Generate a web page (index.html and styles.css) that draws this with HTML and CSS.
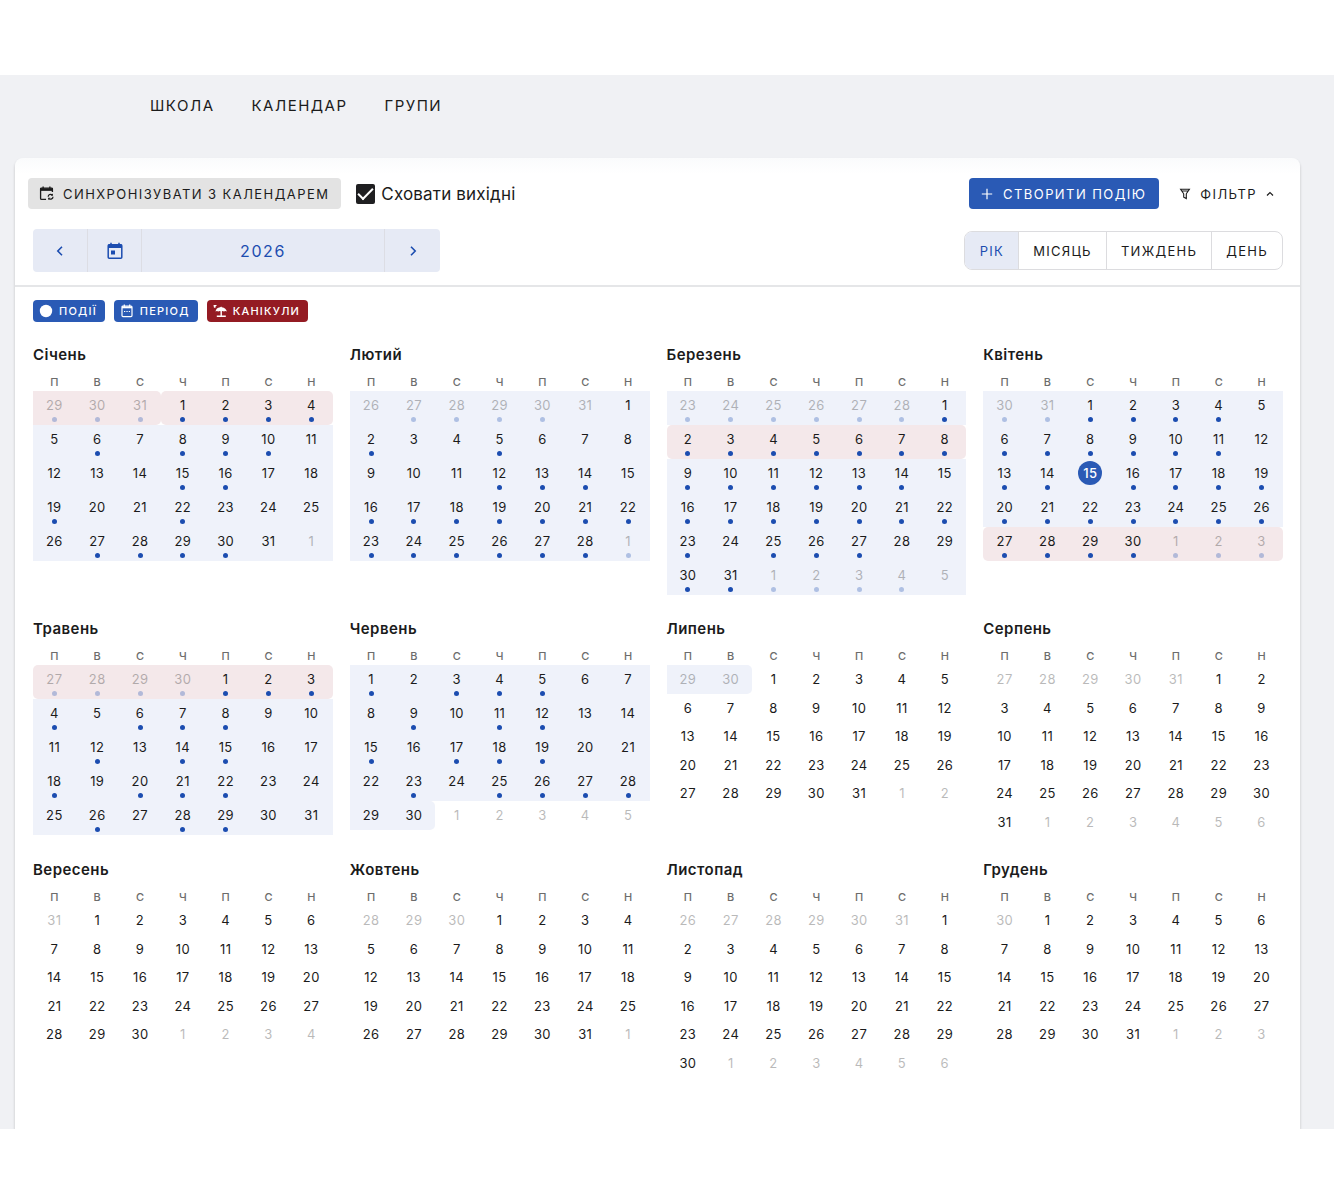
FILE: index.html
```html
<!DOCTYPE html>
<html lang="uk">
<head>
<meta charset="utf-8">
<meta name="viewport" content="width=device-width, initial-scale=1">
<title>Календар</title>
<link rel="stylesheet" href="styles.css">
</head>
<body>
<div class="app">
  <nav class="site-nav">
    <a href="#school">ШКОЛА</a>
    <a href="#calendar">КАЛЕНДАР</a>
    <a href="#groups">ГРУПИ</a>
  </nav>
  <main class="card">
    <header class="toolbar">
      <div class="actions">
        <button class="btn btn-grey" type="button">
          <svg width="15" height="15" viewBox="0 0 16 16" fill="none" stroke="currentColor" stroke-width="1.4"><path d="M14.3 6.500V3.200Q14.300 2.200 13.300 2.200H2.700Q1.700 2.200 1.700 3.200V13.300Q1.700 14.300 2.700 14.300H7.500"/><path d="M1.500 2.500H14.500V5.200H1.500Z" fill="currentColor" stroke="none"/><path d="M4.400 .5V3M11.600 .5V3"/><path d="M9.800 11.400A2.600 2.600 0 0 1 14 9.400M14.900 11.400A2.600 2.600 0 0 1 10.700 13.500" stroke-width="1.300"/><path d="M14.900 8V10.500H12.400ZM9.700 14.900V12.400H12.200Z" fill="currentColor" stroke="none"/></svg>
          <span>СИНХРОНІЗУВАТИ З КАЛЕНДАРЕМ</span>
        </button>
        <label class="check"><input type="checkbox" checked><span>Сховати вихідні</span></label>
        <button class="btn btn-primary" type="button">
          <svg width="12" height="12" viewBox="0 0 12 12" fill="none" stroke="currentColor" stroke-width="1.200"><path d="M6 .8V11.200M.8 6H11.200"/></svg>
          <span>СТВОРИТИ ПОДІЮ</span>
        </button>
        <button class="btn btn-plain" type="button">
          <svg width="12" height="12" viewBox="0 0 12 12" fill="none" stroke="currentColor" stroke-width="1.100"><path d="M1.600 1.200H10.400L7.300 5.800V10.600L4.700 9.200V5.800ZM2.600 3H9.400"/></svg>
          <span>ФІЛЬТР</span>
          <svg width="8" height="8" viewBox="0 0 8 8" fill="none" stroke="currentColor" stroke-width="1.200"><path d="M1 5.500 4 2.500 7 5.500"/></svg>
        </button>
      </div>
      <div class="period">
        <div class="stepper">
          <button type="button" aria-label="Попередній рік"><svg width="10" height="12" viewBox="0 0 10 12" fill="none" stroke="currentColor" stroke-width="1.600"><path d="M7 1.800 2.800 6 7 10.200"/></svg></button>
          <button type="button" aria-label="Сьогодні"><svg width="16" height="18" viewBox="0 0 16 18" fill="none" stroke="currentColor" stroke-width="1.500"><rect x="1.200" y="2.700" width="13.600" height="13.600" rx="1"/><path d="M1 2.500H15V6H1Z" fill="currentColor" stroke="none"/><path d="M4 .8V3M12 .8V3"/><path d="M4 8.500H8V12.500H4Z" fill="currentColor" stroke="none"/></svg></button>
          <button class="stepper-year" type="button">2026</button>
          <button type="button" aria-label="Наступний рік"><svg width="10" height="12" viewBox="0 0 10 12" fill="none" stroke="currentColor" stroke-width="1.600"><path d="M3 1.800 7.200 6 3 10.200"/></svg></button>
        </div>
        <div class="views">
          <button class="active" type="button">РІК</button>
          <button type="button">МІСЯЦЬ</button>
          <button type="button">ТИЖДЕНЬ</button>
          <button type="button">ДЕНЬ</button>
        </div>
      </div>
    </header>
    <div class="legend">
      <button class="chip" type="button"><svg width="14" height="14" viewBox="0 0 14 14"><circle cx="7" cy="7" r="6.200" fill="currentColor"/></svg><span>ПОДІЇ</span></button>
      <button class="chip" type="button"><svg width="14" height="14" viewBox="0 0 14 14" fill="none" stroke="currentColor" stroke-width="1.200"><rect x="2" y="2" width="10" height="10.600" rx="1"/><path d="M2 3.300H12" stroke-width="2"/><path d="M4.300 .6V3M9.700 .6V3M4 7.500H5.300M6.400 7.500H7.700M8.800 7.500H10"/></svg><span>ПЕРІОД</span></button>
      <button class="chip chip-red" type="button"><svg width="14" height="14" viewBox="0 0 14 14" fill="currentColor"><path d="M.5 1H4L2.600 2.600 2.300 4 .9 3.600Z"/><path d="M2.500 7.600Q3 3.700 7.200 3.200L8.200 2.600 8.800 3.200Q13.200 3.800 13.800 7.600Q12.200 6.500 11 7.600 9.900 6.600 8.900 7.300V11.500H12.800V13H3.800V11.500H7.500V7.300Q6.300 6.600 5.300 7.600 4 6.500 2.500 7.600Z"/></svg><span>КАНІКУЛИ</span></button>
    </div>
    <div class="year" id="year"></div>
  </main>
</div>
<script src="calendar.js"></script>
</body>
</html>
```
FILE: styles.css
```css
* { box-sizing: border-box; }

body {
  margin: 0;
  padding: 75px 0;
  background: #fff;
  color: #1b1b1b;
  font-family: Inter, "Liberation Sans", sans-serif;
  font-size: 13px;
}

button {
  margin: 0;
  padding: 0;
  border: 0;
  background: none;
  color: inherit;
  font: inherit;
  cursor: pointer;
}

svg { display: block; flex: none; }

.app {
  background: #f0f1f4;
  overflow: hidden;
}

.site-nav {
  display: flex;
  gap: 37px;
  padding: 20px 150px 42px;
  font-size: 15px;
  line-height: 21px;
  letter-spacing: 0.1em;
}

.site-nav a {
  color: inherit;
  text-decoration: none;
}

.card {
  margin: 0 34px 0 15px;
  padding-bottom: 52px;
  border-radius: 8px 8px 0 0;
  background: linear-gradient(#fafbfc, #fff 16px);
  box-shadow: 0 2px 3px rgba(0, 0, 0, 0.2);
}

.toolbar {
  padding: 20px 17px 13px 13px;
  border-bottom: 2px solid #e5e6e8;
}

.actions,
.period {
  display: flex;
  align-items: center;
}

.btn {
  display: flex;
  align-items: center;
  height: 31px;
  border-radius: 4px;
  letter-spacing: 0.11em;
  white-space: nowrap;
}

.btn-grey {
  gap: 9px;
  padding: 0 12px 0 11px;
  background: #e3e3e3;
}

.btn-primary {
  gap: 10px;
  margin-left: auto;
  padding: 0 13px 0 12px;
  background: #2a5ab5;
  color: #fff;
}

.btn-plain {
  gap: 9px;
  margin-left: 20px;
  padding-right: 9px;
}

.check {
  display: flex;
  align-items: center;
  gap: 6px;
  margin-left: 15px;
  font-size: 17px;
  letter-spacing: 0.01em;
}

.check input {
  display: grid;
  place-items: center;
  width: 19px;
  height: 20px;
  margin: 0;
  border-radius: 2px;
  background: #1f1f21;
  appearance: none;
}

.check input:checked::before {
  content: "";
  width: 13px;
  height: 6px;
  margin-bottom: 4px;
  border: solid #fff;
  border-width: 0 0 2px 2px;
  transform: rotate(-45deg);
}

.period {
  justify-content: space-between;
  margin-top: 20px;
  padding-left: 5px;
}

.stepper {
  display: flex;
  height: 43px;
  border-radius: 4px;
  background: #e6eaf5;
  color: #1c4db0;
  overflow: hidden;
}

.stepper button {
  display: flex;
  align-items: center;
  justify-content: center;
  width: 54px;
}

.stepper button:last-child { width: 56px; }

.stepper button + button { border-left: 1px solid #dcdde4; }

.stepper .stepper-year {
  width: 243px;
  font-size: 16px;
  letter-spacing: 0.1em;
}

.views {
  display: flex;
  height: 39px;
  border: 1px solid #dcdcdf;
  border-radius: 8px;
  overflow: hidden;
}

.views button {
  padding: 0 14px 0 15px;
  letter-spacing: 0.1em;
}

.views button + button {
  padding-left: 14px;
  border-left: 1px solid #dcdcdf;
}

.views .active {
  background: #e6eaf5;
  color: #1c4db0;
}

.legend {
  display: flex;
  gap: 9px;
  padding: 13px 18px 23px;
}

.chip {
  display: flex;
  align-items: center;
  gap: 6px;
  height: 22px;
  padding: 0 8px 0 6px;
  border-radius: 4px;
  background: #2a5ab5;
  color: #fff;
  font-size: 11px;
  font-weight: 500;
  letter-spacing: 0.11em;
}

.chip-red { background: #941b23; }

.year {
  display: grid;
  grid-template-columns: repeat(4, 1fr);
  gap: 24px 17px;
  padding: 0 17px 0 18px;
}

.month h2 {
  margin: 0 0 8px;
  font-size: 15px;
  font-weight: 600;
  line-height: 20px;
  letter-spacing: 0.03em;
}

.month table {
  width: 100%;
  border-collapse: collapse;
  table-layout: fixed;
}

.month th {
  height: 18px;
  padding: 0;
  color: #6c6c6c;
  font-size: 11px;
  font-weight: 500;
  line-height: 18px;
}

.month td {
  height: 29px;
  padding: 2px 0 0;
  line-height: 24px;
  text-align: center;
  vertical-align: top;
  letter-spacing: 0.03em;
}

.month tr:nth-child(even) td { height: 28px; }

.month tr.has-events td { height: 34px; }

.month .period-day { background: #eff2fa; }

.month .holiday { background: #f4e8ea; }

.month .round-left { border-radius: 5px 0 0 5px; }

.month .round-right { border-radius: 0 5px 5px 0; }

.day {
  display: block;
  width: 24px;
  height: 24px;
  margin: 0 auto;
  white-space: nowrap;
}

.dot {
  display: block;
  width: 5px;
  height: 5px;
  margin: 0 auto;
  border-radius: 50%;
  background: #1c4db0;
}

.outside .day,
.outside .dot { opacity: 0.3; }

.today .day {
  border-radius: 50%;
  background: #2a5ab5;
  color: #fff;
  font-weight: 500;
}
```
FILE: calendar.js
```js
const YEAR = 2026;
const MONTHS = ["Січень", "Лютий", "Березень", "Квітень", "Травень", "Червень",
  "Липень", "Серпень", "Вересень", "Жовтень", "Листопад", "Грудень"];
const WEEKDAYS = ["П", "В", "С", "Ч", "П", "С", "Н"];

// One string per week of a month; 1 marks a day that has events.
const EVENTS = [
  ["1111111", "0101110", "0001100", "1001000", "0111100"],
  ["0111100", "1001000", "0001110", "1111111", "1111111"],
  ["1111111", "1111111", "1111110", "1111111", "1011100", "1111110"],
  ["1111110", "1111110", "1101111", "1111111", "1111111"],
  ["1111111", "1011100", "0101100", "1011100", "0101100"],
  ["1011100", "0101100", "1011100", "0101111"]
];

const day = (month, date) => new Date(YEAR, month, date).getTime();
const TODAY = day(3, 15);
const STUDY_END = day(5, 30);
const HOLIDAYS = [
  [day(-1, 22), day(-1, 31)],
  [day(0, 1), day(0, 4)],
  [day(2, 2), day(2, 8)],
  [day(3, 27), day(4, 3)]
];

function classesFor(time, outside) {
  const classes = [];
  const holiday = HOLIDAYS.find(([from, to]) => time >= from && time <= to);
  if (holiday) {
    classes.push("holiday");
    if (time === holiday[0]) classes.push("round-left");
    if (time === holiday[1]) classes.push("round-right");
  } else if (time <= STUDY_END) {
    classes.push("period-day");
    if (time === STUDY_END) classes.push("round-right");
  }
  if (outside) classes.push("outside");
  if (time === TODAY) classes.push("today");
  return classes.join(" ");
}

function renderMonth(name, month) {
  const offset = (new Date(YEAR, month, 1).getDay() + 6) % 7;
  const length = new Date(YEAR, month + 1, 0).getDate();
  const weeks = Math.ceil((offset + length) / 7);
  let rows = "";
  for (let w = 0; w < weeks; w++) {
    const marks = (EVENTS[month] || [])[w] || "0000000";
    let cells = "";
    for (let d = 0; d < 7; d++) {
      const date = new Date(YEAR, month, 1 - offset + w * 7 + d);
      const outside = date.getMonth() !== month;
      const dot = marks[d] === "1" ? '<span class="dot"></span>' : "";
      cells += `<td class="${classesFor(date.getTime(), outside)}"><span class="day">${date.getDate()}</span>${dot}</td>`;
    }
    rows += `<tr class="${marks.includes("1") ? "has-events" : ""}">${cells}</tr>`;
  }
  const head = WEEKDAYS.map(label => `<th scope="col">${label}</th>`).join("");
  return `<section class="month"><h2>${name}</h2><table><thead><tr>${head}</tr></thead><tbody>${rows}</tbody></table></section>`;
}

document.getElementById("year").innerHTML = MONTHS.map(renderMonth).join("");
```
